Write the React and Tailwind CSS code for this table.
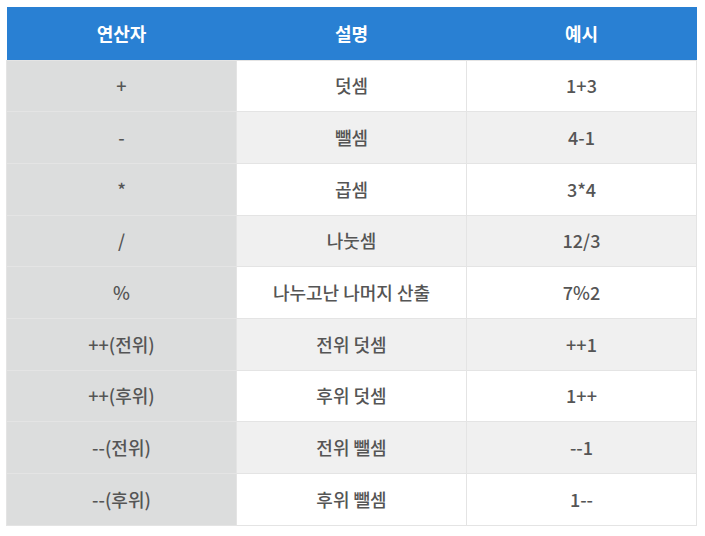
const rows = [
  ["+", "덧셈", "1+3"],
  ["-", "뺄셈", "4-1"],
  ["*", "곱셈", "3*4"],
  ["/", "나눗셈", "12/3"],
  ["%", "나누고난 나머지 산출", "7%2"],
  ["++(전위)", "전위 덧셈", "++1"],
  ["++(후위)", "후위 덧셈", "1++"],
  ["--(전위)", "전위 뺄셈", "--1"],
  ["--(후위)", "후위 뺄셈", "1--"],
];

export default function App() {
  return (
    <div className="w-[705px] h-[536px] bg-white pt-[7px] pl-[6px] font-['Noto_Sans_CJK_KR','Noto_Sans',sans-serif]">
      <table className="w-[691px] border-collapse table-fixed text-[18px] font-medium text-[#555]">
        <thead>
          <tr className="h-[53px] bg-[#2980d3] text-white">
            <th className="w-[230px] font-bold">연산자</th>
            <th className="w-[230px] font-bold">설명</th>
            <th className="font-bold">예시</th>
          </tr>
        </thead>
        <tbody>
          {rows.map((r, i) => (
            <tr
              key={i}
              className={`h-[51.7px] ${i % 2 ? "bg-[#f0f0f0]" : "bg-white"}`}
            >
              <td className="text-center bg-[#dcdddd] border border-[#e4e4e4]">{r[0]}</td>
              <td className="text-center border border-[#e4e4e4]">{r[1]}</td>
              <td className="text-center border border-[#e4e4e4]">{r[2]}</td>
            </tr>
          ))}
        </tbody>
      </table>
    </div>
  );
}
